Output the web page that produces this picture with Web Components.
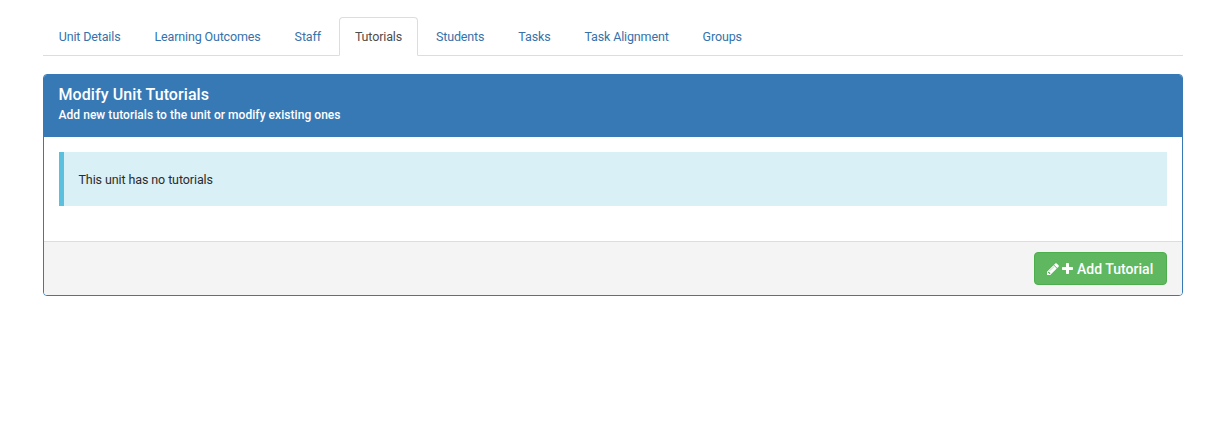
<!DOCTYPE html>
<html lang="en"><head><meta charset="utf-8"><title>Unit Tutorials</title>
<style>body{margin:0;background:#fff;font:12.5px/18px Roboto,sans-serif;letter-spacing:-.1px;color:#2b2b2b}</style></head>
<body>
<unit-page>
<unit-tabs>
<unit-tab>Unit Details</unit-tab><unit-tab>Learning Outcomes</unit-tab><unit-tab>Staff</unit-tab><unit-tab active>Tutorials</unit-tab><unit-tab>Students</unit-tab><unit-tab>Tasks</unit-tab><unit-tab>Task Alignment</unit-tab><unit-tab>Groups</unit-tab>
</unit-tabs>
<unit-panel><span slot="title">Modify Unit Tutorials</span><span slot="subtitle">Add new tutorials to the unit or modify existing ones</span>
<info-callout>This unit has no tutorials</info-callout>
<add-button slot="footer">Add Tutorial</add-button></unit-panel>
</unit-page>
<script>
const define=(name,html)=>customElements.define(name,class extends HTMLElement{constructor(){super();this.attachShadow({mode:'open'}).innerHTML=html}});
define('unit-page','<style>:host{display:block;width:1140px;padding:17px 0 0 43px}</style><slot></slot>');
define('unit-tabs','<style>:host{display:flex;gap:2px;height:38px;border-bottom:1px solid #ddd;margin-bottom:18px;letter-spacing:-.145px}</style><slot></slot>');
define('unit-tab','<style>:host{display:block;box-sizing:border-box;height:39px;padding:10px 15.3px 10px 14.7px;border:1px solid transparent;border-radius:4px 4px 0 0;line-height:18px;color:#3572ab;white-space:nowrap}:host([active]){color:#4d4d4d;background:#fff;border-color:#ddd;border-bottom-color:#fff}</style><slot></slot>');
define('unit-panel','<style>:host{display:block;box-sizing:border-box;height:222px;border:1px solid #3779b5;border-radius:4px;overflow:hidden}header{box-sizing:border-box;height:62px;padding:11px 14.5px;background:#3779b5;color:#fff}h3,p{margin:0}h3{font-size:16px;line-height:18px;font-weight:500;letter-spacing:.08px}p{font-size:12px;line-height:22px;font-weight:500;letter-spacing:.05px}main{box-sizing:border-box;height:104px;padding:15px}footer{box-sizing:border-box;height:54px;padding:10px 15px;background:#f4f4f4;border-top:1px solid #ddd;display:flex;justify-content:flex-end}</style><header><h3><slot name="title"></slot></h3><p><slot name="subtitle"></slot></p></header><main><slot></slot></main><footer><slot name="footer"></slot></footer>');
define('info-callout','<style>:host{display:block;box-sizing:border-box;height:54px;padding:19px 14.5px 17px;background:#daf0f7;border-left:5px solid #5bc0de}</style><slot></slot>');
define('add-button','<style>:host{display:flex;box-sizing:border-box;width:133px;height:33px;padding:0 12px;align-items:center;background:#5fb760;border:1px solid #4cae4c;border-radius:4px;color:#fff;font-size:14px;font-weight:500;letter-spacing:.02px;white-space:nowrap}svg{fill:currentColor;flex:none}.plus{margin:0 4px 0 3px}</style><svg width="12" height="12" viewBox="0 0 1536 1536"><path transform="matrix(1 0 0 -1 0 1408)" d="M363 0l91 91-235 235-91-91v-107h128v-128h107zM886 928q0 22-22 22-10 0-17-7l-542-542q-7-7-7-17 0-22 22-22 10 0 17 7l542 542q7 7 7 17zM832 1120l416-416-832-832h-416v416zM1515 1024q0-53-37-90l-166-166-416 416 166 165q36 38 90 38 53 0 91-38l235-234q37-39 37-91z"/></svg><svg class="plus" width="11" height="11" viewBox="0 0 11 11"><path d="M4.700 0h1.600q.7 0 .7.700V4h3.300q.7 0 .7.700v1.600q0 .7-.7.700H7v3.300q0 .7-.7.700H4.700q-.7 0-.7-.7V7H.7Q0 7 0 6.300V4.700Q0 4 .7 4H4V.7Q4 0 4.700 0z"/></svg><slot></slot>');
</script></body></html>
